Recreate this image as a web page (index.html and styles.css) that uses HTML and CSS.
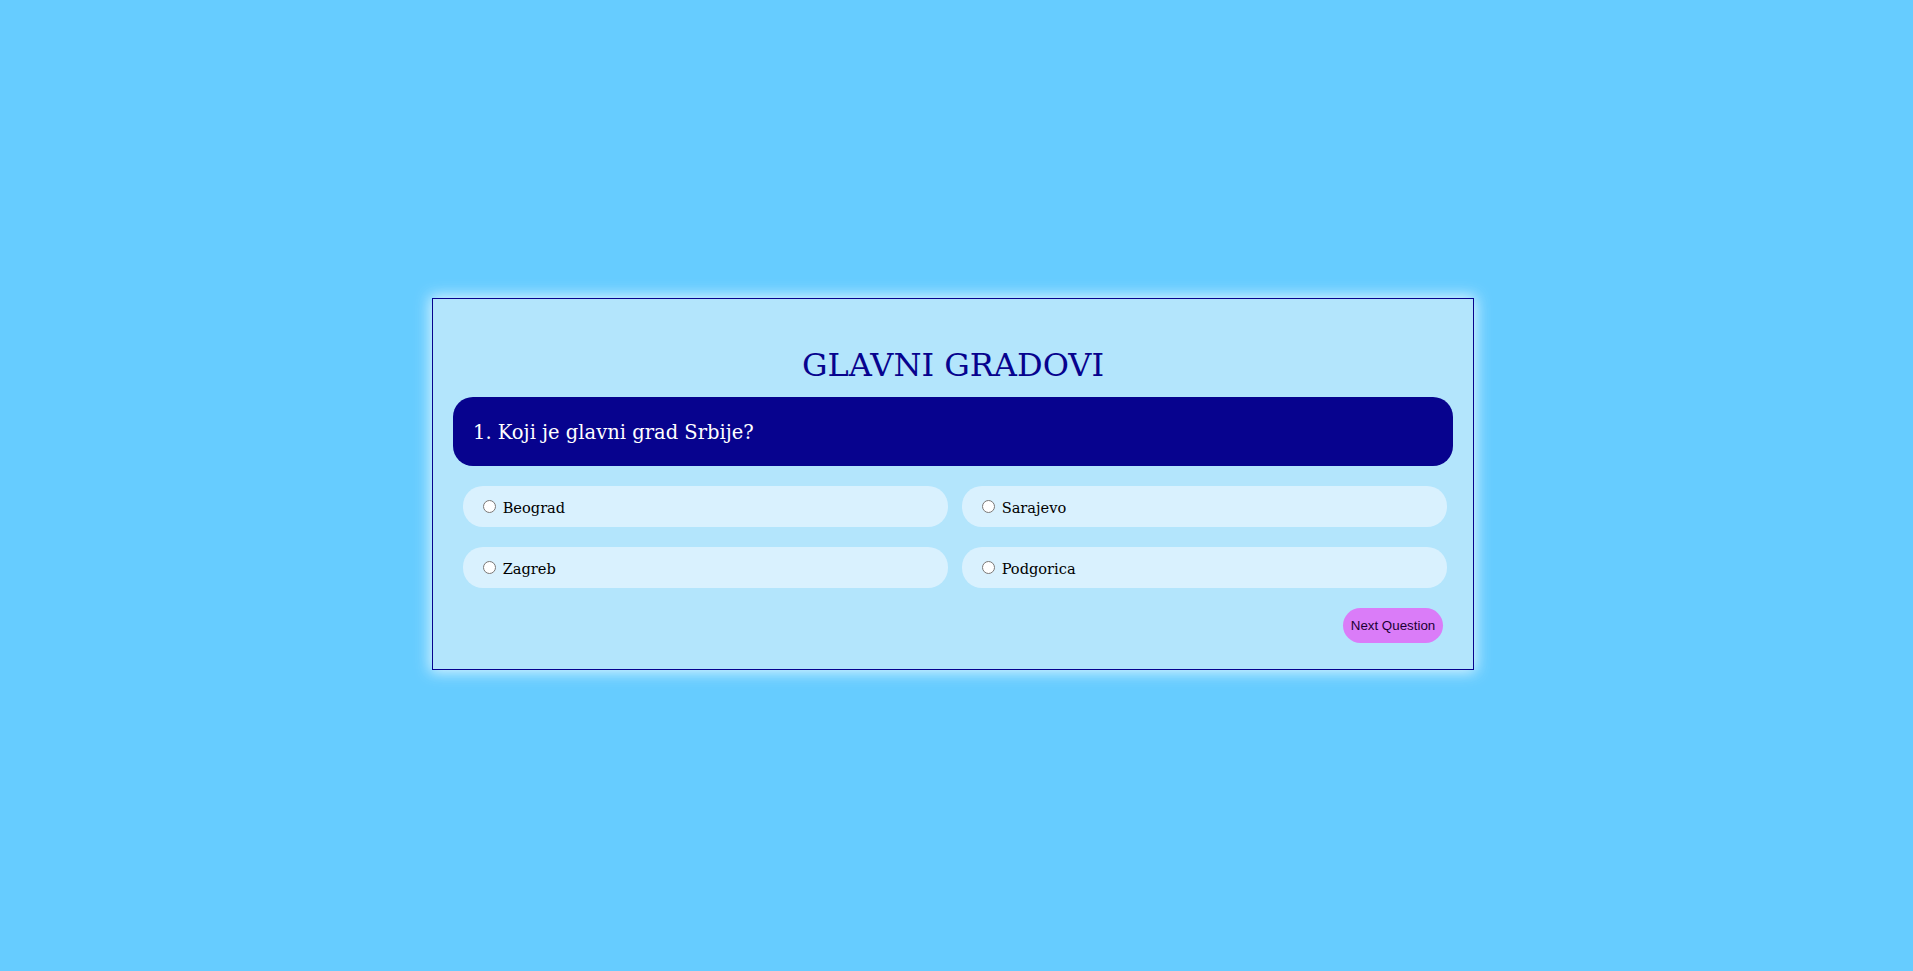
FILE: index.html
```html
<!DOCTYPE html>
<html lang="sr">
<head>
<meta charset="utf-8">
<title>Glavni gradovi</title>
<link rel="stylesheet" href="styles.css">
</head>
<body>
  <main class="quiz">
    <h1 class="quiz-title">GLAVNI GRADOVI</h1>
    <div class="question">1. Koji je glavni grad Srbije?</div>
    <div class="answers">
      <label class="answer"><input type="radio" name="q1" value="Beograd"> Beograd</label>
      <label class="answer"><input type="radio" name="q1" value="Sarajevo"> Sarajevo</label>
      <label class="answer"><input type="radio" name="q1" value="Zagreb"> Zagreb</label>
      <label class="answer"><input type="radio" name="q1" value="Podgorica"> Podgorica</label>
    </div>
    <div class="actions">
      <button class="next-btn" type="button">Next Question</button>
    </div>
  </main>
</body>
</html>
```

FILE: styles.css
```css
html, body {
  margin: 0;
  padding: 0;
}

body {
  background: #66ccff;
  height: 100vh;
  display: flex;
  align-items: center;
  justify-content: center;
  padding-right: 7px;
  box-sizing: border-box;
  font-family: "DejaVu Serif", "Liberation Serif", serif;
}

.quiz {
  box-sizing: border-box;
  width: 1042px;
  background: #b3e5fc;
  border: 1px solid #07038e;
  box-shadow: 0 0 14px 2px rgba(230, 248, 255, 0.95);
  padding: 0 20px 26px 20px;
  margin-bottom: 3px;
}

.quiz-title {
  margin: 47px 0 13px 0;
  font-size: 32px;
  line-height: 38px;
  font-weight: normal;
  text-align: center;
  color: #07038e;
}

.question {
  background: #07038e;
  color: #ffffff;
  border-radius: 20px;
  padding: 21px 20px 19px 20px;
  font-size: 19.5px;
  line-height: 29px;
}

.answers {
  display: grid;
  grid-template-columns: 1fr 1fr;
  column-gap: 14px;
  row-gap: 20px;
  margin-top: 20px;
  padding: 0 6px 0 10px;
}

.answer {
  display: flex;
  align-items: center;
  height: 41px;
  box-sizing: border-box;
  padding: 2px 0 0 15px;
  background: #d9f1fe;
  border-radius: 20px;
  font-size: 14.6px;
  color: #000000;
  white-space: pre;
}

.answer input {
  margin: -2px 2px 0 5px;
  width: 13px;
  height: 13px;
}

.actions {
  display: flex;
  justify-content: flex-end;
  margin-top: 20px;
  padding-right: 10px;
}

.next-btn {
  width: 100px;
  height: 35px;
  border: none;
  border-radius: 18px;
  background: #da7cf8;
  color: #1a0033;
  font-family: "Liberation Sans", Arial, sans-serif;
  font-size: 13.33px;
  padding: 0;
}
```
